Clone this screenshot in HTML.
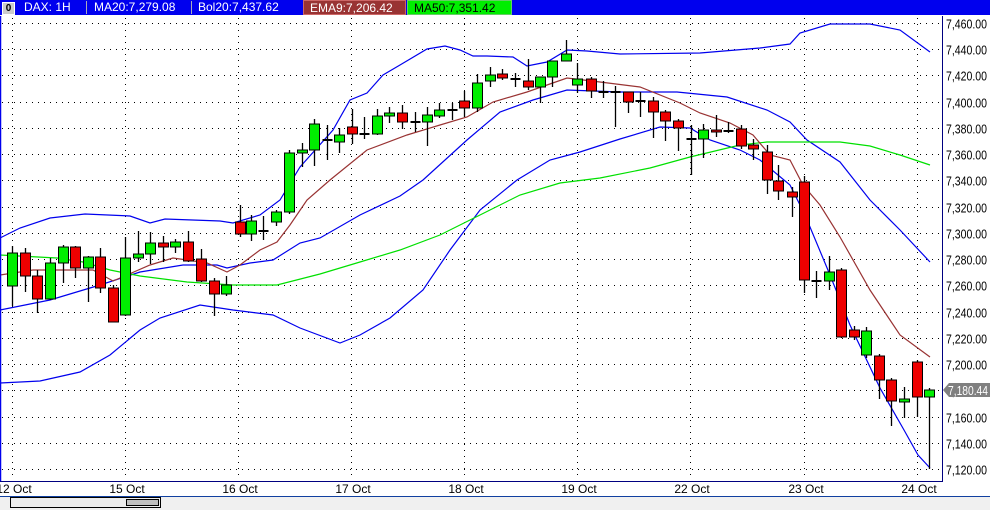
<!DOCTYPE html>
<html><head><meta charset="utf-8"><style>
body{margin:0;width:990px;height:510px;overflow:hidden;background:#fff;font-family:"Liberation Sans",sans-serif}
#hdr{position:absolute;left:0;top:0;width:990px;height:15px;background:#0000ee;color:#fff;font-size:12px;line-height:15px}
#hdr span{position:absolute;top:0;height:15px;white-space:nowrap}
.sep{position:absolute;top:1px;width:1px;height:13px;background:#aab}
svg{position:absolute;left:0;top:0}
</style></head><body>
<svg id="c" width="990" height="510" xmlns="http://www.w3.org/2000/svg"></svg>
<div id="hdr">
<span style="left:2px;top:2px;width:11px;height:11px;background:#ccc;border:1px solid #fff;color:#000;font-size:10px;line-height:11px;text-align:center;font-weight:bold">0</span>
<span style="left:24px">DAX: 1H</span><div class="sep" style="left:86px"></div>
<span style="left:94px">MA20:7,279.08</span><div class="sep" style="left:191px"></div>
<span style="left:198px">Bol20:7,437.62</span>
<span style="left:303px;width:103px;background:#993333;border:1px solid #c66;box-sizing:border-box;padding-left:6px">EMA9:7,206.42</span>
<span style="left:407px;width:105px;background:#00ee00;color:#000;border:1px solid #6c6;box-sizing:border-box;padding-left:6px">MA50:7,351.42</span>
</div>
<script>
const s=[];
const yv=v=>23+(7460-v)*446/340;
for(let v=7120;v<=7460;v+=20){const y=Math.round(yv(v))+.5;s.push(`<line x1="2" y1="${y}" x2="941" y2="${y}" stroke="#000" stroke-dasharray="1 5"/>`);
s.push(`<text x="946" y="${y+5}" textLength="41" lengthAdjust="spacingAndGlyphs" font-size="12.5" fill="#000">${v.toLocaleString('en-US')}.00</text>`);}
const gx=[12,125,238,351,464,577,690,804,917],gl=["12 Oct","15 Oct","16 Oct","17 Oct","18 Oct","19 Oct","22 Oct","23 Oct","24 Oct"];
gx.forEach((x,i)=>{s.push(`<line x1="${x+.5}" y1="18" x2="${x+.5}" y2="480" stroke="#000" stroke-dasharray="1 5"/>`);
s.push(`<text x="${x+2}" y="493" text-anchor="middle" font-size="12" fill="#000">${gl[i]}</text>`);});
const L=(pts,c)=>s.push(`<polyline fill="none" stroke="${c}" stroke-width="1.2" points="${pts}"/>`);
L("0,238 20,228 50,218 85,214 130,216 150,223 165,219 220,221 233,223 260,215 280,200 300,167 333,130 350,100 367,93 383,75 400,65 427,49 445,46 460,50 473,56 487,56 513,57 527,66 547,62 567,50 587,51 620,54 700,53 760,48 790,44 800,33 830,24 870,24 900,30 930,52","#0000ee");
L("0,310 50,300 100,285 140,272 183,265 217,265 227,268 250,263 273,260 300,243 320,238 360,215 400,196 423,180 467,140 500,112 533,100 567,90 620,92 677,92 727,97 767,110 790,122 807,140 840,162 870,200 900,230 930,262","#0000ee");
L("0,383 40,381 80,372 110,355 140,330 160,318 200,305 233,310 273,315 300,328 340,343 360,335 390,318 423,290 450,250 480,210 517,180 550,160 580,152 620,139 660,127 690,128 710,140 740,150 760,160 790,185 805,215 830,275 850,325 880,388 904,430 918,455 930,468","#0000ee");
L("0,255 57,258 83,262 110,270 140,276 187,282 233,285 277,285 320,274 360,262 400,250 440,235 480,215 520,195 560,183 600,178 650,168 690,157 740,145 767,142 840,142 870,146 900,155 930,165","#00e000");
L("0,275 33,270 67,270 93,270 113,281 127,275 150,265 173,258 187,260 207,263 227,272 240,265 260,250 277,242 290,225 307,200 330,180 367,150 407,135 440,125 467,117 493,102 527,92 547,85 567,78 600,82 640,87 680,103 700,113 730,123 753,135 770,155 790,160 803,185 820,205 840,237 870,290 900,335 930,357","#993333");
const C=[[12,253,286,246,306,1],[25,253,276,248,292,0],[37,276,299,270,313,0],[50,263,299,258,300,1],[63,247,263,245,283,1],[75,247,268,246,278,0],[88,257,268,256,302,1],[100,257,288,248,293,0],[113,288,322,285,322,0],[125,258,315,237,316,1],[138,254,258,231,262,1],[150,243,254,232,264,1],[163,243,247,236,262,0],[175,242,247,239,253,1],[188,242,261,231,262,0],[201,259,281,249,282,0],[214,281,294,278,316,0],[226,285,294,276,296,1],
[240,222,234,205,237,0],[251,221,234,215,241,1],[263,231,231,216,240,2],[276,212,222,210,226,1],[289,153,212,150,214,1],[302,150,153,143,167,1],[314,124,150,119,166,1],[327,140,140,125,160,2],[339,135,142,128,153,1],[352,127,134,109,144,0],[364,134,134,117,139,2],[377,116,134,109,135,1],[389,113,116,107,123,1],[402,113,122,105,129,0],[415,122,122,112,132,2],[427,115,122,107,146,1],[439,110,116,103,118,1],[452,110,110,103,120,2],[464,101,108,91,117,0],[477,83,108,74,112,1],[490,75,81,67,87,1],[502,74,78,69,80,0],[515,79,79,73,87,2],[528,81,87,59,90,0],[540,77,87,77,103,1],[552,61,77,61,87,1],[566,54,61,40,61,1],[577,79,85,63,93,1],[591,79,91,77,98,0],[603,92,92,81,98,2],[615,92,92,86,127,2],[628,92,102,92,113,0],[640,101,101,92,117,2],[653,101,112,97,138,0],[665,112,121,110,141,0],[678,121,128,119,151,0],[691,139,139,125,175,2],[703,130,139,124,158,1],[716,130,132,115,137,0],[728,131,131,122,133,2],[741,129,146,125,149,0],[753,145,149,139,160,0],[767,152,180,145,194,0],[778,181,191,165,200,0],[792,192,197,187,217,0],[804,182,280,176,293,0],[816,281,281,271,298,2],[829,272,281,256,290,1],[841,270,337,268,338,0],[854,330,337,326,340,0],[866,331,355,327,358,1],[879,356,380,354,399,0],[891,380,401,378,426,0],[904,399,402,387,418,1],[917,362,397,360,417,0],[929,390,397,388,469,1]];
C.forEach(([x,o,c,h,l,t])=>{x+=.5;s.push(`<line x1="${x}" y1="${h}" x2="${x}" y2="${l}" stroke="#000" stroke-width="1.3"/>`);
if(t==2)s.push(`<line x1="${x-5}" y1="${o}" x2="${x+5}" y2="${o}" stroke="#000" stroke-width="2"/>`);
else{const a=Math.min(o,c),b=Math.max(o,c);s.push(`<rect x="${x-5}" y="${a}" width="10" height="${Math.max(b-a,2)}" fill="${t?'#00ee00':'#ee0000'}" stroke="#000" stroke-width="1"/>`);}});
s.push(`<line x1="0.5" y1="16" x2="0.5" y2="481" stroke="#0000ee" stroke-width="1.5"/>`);
s.push(`<line x1="942.5" y1="16" x2="942.5" y2="481" stroke="#000080" stroke-width="1"/>`);
s.push(`<line x1="0" y1="481.5" x2="943" y2="481.5" stroke="#000080"/>`);
s.push(`<rect x="0" y="496" width="990" height="14" fill="#f0f0f0"/><line x1="0" y1="496.5" x2="990" y2="496.5" stroke="#1040a0"/>`);
s.push(`<rect x="10.5" y="497.5" width="150" height="10" fill="#ececec" stroke="#000"/><rect x="126.5" y="499.5" width="32" height="6" fill="#c0c0c0" stroke="#000"/>`);
const py=390;s.push(`<polygon points="943,${py} 949,${py-7} 990,${py-7} 990,${py+7} 949,${py+7}" fill="#808080"/><text x="948" y="${py+5}" textLength="40" lengthAdjust="spacingAndGlyphs" font-size="12.5" fill="#fff">7,180.44</text>`);
document.getElementById('c').innerHTML=s.join('');
</script>
</body></html>
